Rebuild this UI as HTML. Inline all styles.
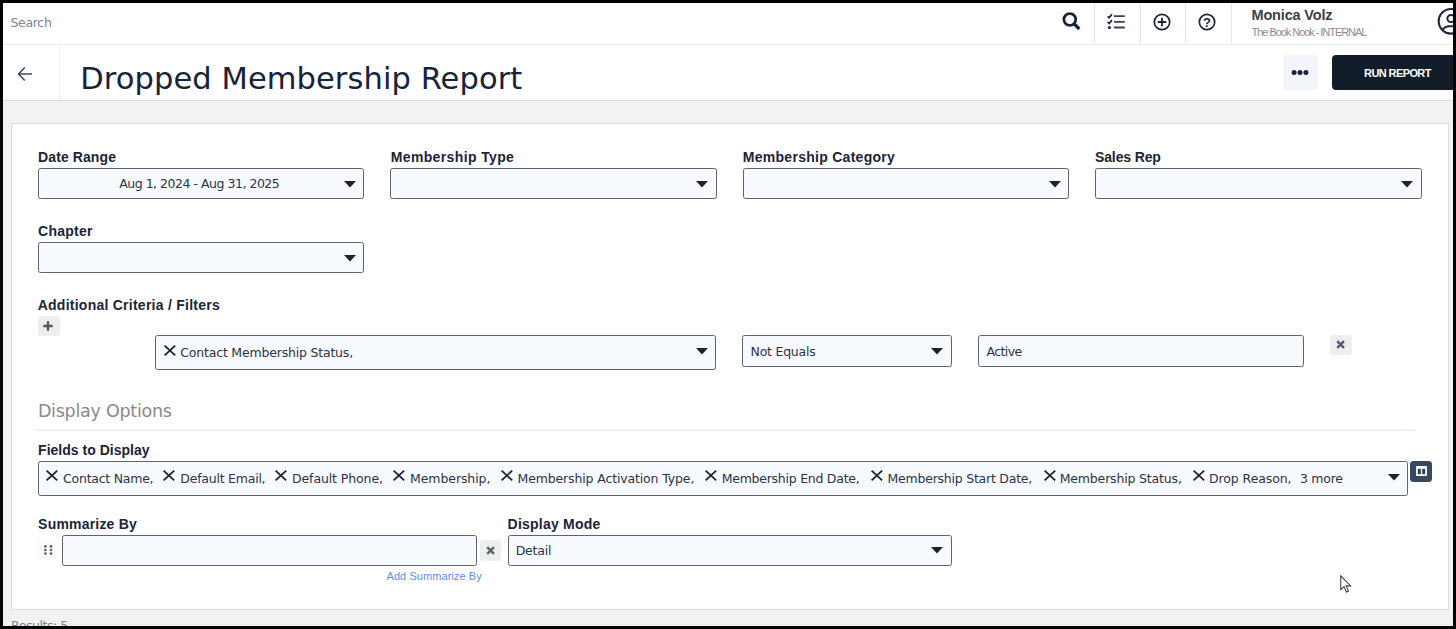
<!DOCTYPE html>
<html lang="en"><head><meta charset="utf-8"><title>Dropped Membership Report</title>
<style>
html,body{margin:0;padding:0}
h1,h2{margin:0;font-weight:400}
body{width:1456px;height:629px;overflow:hidden;background:#f2f2f2;position:relative;font-family:"Liberation Sans",sans-serif}
.t{position:absolute;white-space:nowrap;line-height:1}
.d{font-family:"DejaVu Sans","Liberation Sans",sans-serif}
.a{position:absolute;display:block;overflow:visible}
.inp{position:absolute;box-sizing:border-box;border:1px solid #5f636c;border-radius:2.5px;background:#f7faff}
.blk{position:absolute}
.btn{position:absolute;background:#eeeeee;border-radius:3px}
</style></head><body>
<header>
<div class="blk" style="left:0;top:0;width:1456px;height:44px;background:#fff;border-bottom:1px solid #ececec"></div>
<div class="blk" style="left:0;top:45px;width:1456px;height:55px;background:#fff;border-bottom:1px solid #dadada"></div>
<div class="blk" style="left:59px;top:45px;width:1px;height:55px;background:#efefef"></div>
<div class="blk" style="left:1094px;top:3px;width:1px;height:41px;background:#e6e6e6"></div>
<div class="blk" style="left:1139.6px;top:3px;width:1px;height:41px;background:#e6e6e6"></div>
<div class="blk" style="left:1185px;top:3px;width:1px;height:41px;background:#e6e6e6"></div>
<div class="blk" style="left:1230.7px;top:3px;width:1px;height:41px;background:#e6e6e6"></div>
<div class="t d" style="left:10.50px;top:16.93px;font-size:12.5px;color:#7b8598;letter-spacing:-0.32px">Search</div>
<svg class="a" style="left:1062px;top:12px" width="20" height="20" viewBox="0 0 20 20"><circle cx="7.8" cy="7.5" r="5.9" fill="none" stroke="#1b2438" stroke-width="2.8"/><path d="M11.8 11.5L17.3 17" stroke="#1b2438" stroke-width="3.2"/></svg>
<svg class="a" style="left:1106px;top:13px" width="20" height="18" viewBox="0 0 20 18"><path d="M8 3.2H18.8M8 8.9H18.8M8 14.5H18.8" fill="none" stroke="#3c4253" stroke-width="1.8"/><path d="M1.7 3.3L3.1 4.8L6 1.4M1.7 9L3.1 10.5L6 7.1" fill="none" stroke="#1b2438" stroke-width="1.7"/><circle cx="3.4" cy="14.5" r="1.55" fill="#1b2438"/></svg>
<svg class="a" style="left:1151.7px;top:11.7px" width="20" height="20" viewBox="0 0 20 20"><circle cx="10" cy="10" r="7.7" fill="none" stroke="#1b2438" stroke-width="1.7"/><path d="M10 5.8V14.2M5.8 10H14.2" stroke="#1b2438" stroke-width="1.8"/></svg>
<svg class="a" style="left:1197px;top:11.7px" width="20" height="20" viewBox="0 0 20 20"><circle cx="10" cy="10" r="7.7" fill="none" stroke="#1b2438" stroke-width="1.7"/><text x="10" y="14.7" text-anchor="middle" font-family="Liberation Sans,sans-serif" font-weight="700" font-size="13" fill="#1b2438">?</text></svg>
<div class="t" style="left:1251.50px;top:7.63px;font-size:14.5px;color:#3d3e42;font-weight:700;letter-spacing:-0.16px">Monica Volz</div>
<div class="t" style="left:1251.60px;top:26.69px;font-size:11px;color:#8d8d8d;letter-spacing:-1.052px">The Book Nook - INTERNAL</div>
<svg class="a" style="left:1436px;top:6px" width="20" height="32" viewBox="0 0 20 32"><circle cx="15" cy="15.3" r="12.3" fill="#fff" stroke="#1b2438" stroke-width="2.1"/><circle cx="15" cy="12.5" r="3.6" fill="none" stroke="#1b2438" stroke-width="2"/><path d="M6.8 23.6C8.2 21.2 10.8 20.2 13.5 20.2H20" fill="none" stroke="#1b2438" stroke-width="2"/></svg>
</header>
<div class="pagehead">
<svg class="a" style="left:17px;top:66px" width="16" height="16" viewBox="0 0 16 16"><path d="M15 8H1.8M7.8 1.5L1.5 8L7.8 14.5" fill="none" stroke="#3d4a63" stroke-width="1.5"/></svg>
<h1 class="t d" style="left:80.20px;top:64.40px;font-size:30.5px;color:#17223b;letter-spacing:0.091px">Dropped Membership Report</h1>
<div class="blk" style="left:1283px;top:55px;width:35px;height:35px;background:#f2f5fa;border-radius:3px"></div>
<svg class="a" style="left:1291px;top:70px" width="18" height="5" viewBox="0 0 18 5"><circle cx="3.1" cy="2.5" r="2.5" fill="#1b2438"/><circle cx="9" cy="2.5" r="2.5" fill="#1b2438"/><circle cx="14.9" cy="2.5" r="2.5" fill="#1b2438"/></svg>
<div class="blk" style="left:1331.5px;top:55px;width:130px;height:35px;background:#131d2a;border-radius:4px"></div>
<div class="t" style="left:1364.10px;top:67.59px;font-size:11px;color:#ffffff;font-weight:700;letter-spacing:-0.6px">RUN REPORT</div>
</div>
<main>
<div class="blk" style="left:11px;top:123px;width:1438px;height:487px;background:#fff;box-sizing:border-box;border:1px solid #dedede"></div>
<label class="t" style="left:38.10px;top:149.95px;font-size:14px;color:#1b2438;font-weight:700;letter-spacing:0.089px">Date Range</label>
<div class="inp" style="left:37.7px;top:168px;width:326.5px;height:31px;"></div>
<svg class="a" style="left:343.8px;top:181px" width="12" height="7" viewBox="0 0 12 7"><path d="M0 0H12L6 6.4Z" fill="#222"/></svg>
<label class="t" style="left:390.70px;top:149.95px;font-size:14px;color:#1b2438;font-weight:700;letter-spacing:0.372px">Membership Type</label>
<div class="inp" style="left:390.2px;top:168px;width:326.5px;height:31px;"></div>
<svg class="a" style="left:696.3px;top:181px" width="12" height="7" viewBox="0 0 12 7"><path d="M0 0H12L6 6.4Z" fill="#222"/></svg>
<label class="t" style="left:742.80px;top:149.95px;font-size:14px;color:#1b2438;font-weight:700;letter-spacing:0.278px">Membership Category</label>
<div class="inp" style="left:742.7px;top:168px;width:326.5px;height:31px;"></div>
<svg class="a" style="left:1048.8px;top:181px" width="12" height="7" viewBox="0 0 12 7"><path d="M0 0H12L6 6.4Z" fill="#222"/></svg>
<label class="t" style="left:1095.00px;top:149.95px;font-size:14px;color:#1b2438;font-weight:700;letter-spacing:-0.125px">Sales Rep</label>
<div class="inp" style="left:1095.2px;top:168px;width:326.5px;height:31px;"></div>
<svg class="a" style="left:1401.3px;top:181px" width="12" height="7" viewBox="0 0 12 7"><path d="M0 0H12L6 6.4Z" fill="#222"/></svg>
<div class="t d" style="left:119.20px;top:177.73px;font-size:12.5px;color:#2b3346;letter-spacing:-0.48px">Aug 1, 2024 - Aug 31, 2025</div>
<label class="t" style="left:38.10px;top:224.15px;font-size:14px;color:#1b2438;font-weight:700;letter-spacing:0.233px">Chapter</label>
<div class="inp" style="left:37.7px;top:242px;width:326.5px;height:31px;"></div>
<svg class="a" style="left:343.8px;top:255px" width="12" height="7" viewBox="0 0 12 7"><path d="M0 0H12L6 6.4Z" fill="#222"/></svg>
<label class="t" style="left:37.70px;top:297.95px;font-size:14px;color:#1b2438;font-weight:700;letter-spacing:0.25px">Additional Criteria / Filters</label>
<div class="btn" style="left:38px;top:316px;width:22px;height:19.5px"></div>
<svg class="a" style="left:42.9px;top:320.9px" width="10" height="10" viewBox="0 0 10 10"><path d="M5 0.3V9.7M0.3 5H9.7" stroke="#55585f" stroke-width="2.3"/></svg>
<div class="inp" style="left:155.3px;top:335.3px;width:560.7px;height:34.5px;"></div>
<svg class="a" style="left:163.9px;top:344.8px" width="11.8" height="11" viewBox="0 0 10 10" preserveAspectRatio="none"><path d="M0.5 0.5L9.5 9.5M9.5 0.5L0.5 9.5" stroke="#1c2434" stroke-width="1.5" fill="none"/></svg>
<div class="t d" style="left:180.30px;top:347.43px;font-size:12.5px;color:#2b3346;letter-spacing:-0.192px">Contact Membership Status,</div>
<svg class="a" style="left:696.2px;top:348.3px" width="12" height="7" viewBox="0 0 12 7"><path d="M0 0H12L6 6.4Z" fill="#222"/></svg>
<div class="inp" style="left:742px;top:335.3px;width:210px;height:31.5px;"></div>
<div class="t d" style="left:750.50px;top:345.93px;font-size:12.5px;color:#2b3346;letter-spacing:-0.222px">Not Equals</div>
<svg class="a" style="left:930.8px;top:348.3px" width="12" height="7" viewBox="0 0 12 7"><path d="M0 0H12L6 6.4Z" fill="#222"/></svg>
<div class="inp" style="left:977.7px;top:335.3px;width:326.5px;height:31.5px;"></div>
<div class="t d" style="left:986.50px;top:345.93px;font-size:12.5px;color:#2b3346;letter-spacing:-0.6px">Active</div>
<div class="btn" style="left:1330px;top:335px;width:22px;height:20px"></div>
<svg class="a" style="left:1336.2px;top:340.2px" width="9.2" height="9.2" viewBox="0 0 10 10"><path d="M1.3 1.3L8.7 8.7M8.7 1.3L1.3 8.7" stroke="#525c6b" stroke-width="2.7"/></svg>
<h2 class="t d" style="left:37.90px;top:402.89px;font-size:17.5px;color:#8a8a8a;letter-spacing:-0.257px">Display Options</h2>
<div class="blk" style="left:35px;top:429px;width:1381px;height:2px;background:#eff1f8"></div>
<label class="t" style="left:38.10px;top:442.95px;font-size:14px;color:#1b2438;font-weight:700;letter-spacing:0.012px">Fields to Display</label>
<div class="inp" style="left:37.7px;top:461px;width:1370px;height:34.7px;"></div>
<svg class="a" style="left:46.1px;top:470.4px" width="11.8" height="11" viewBox="0 0 10 10" preserveAspectRatio="none"><path d="M0.5 0.5L9.5 9.5M9.5 0.5L0.5 9.5" stroke="#1c2434" stroke-width="1.5" fill="none"/></svg>
<div class="t d" style="left:63.10px;top:473.43px;font-size:12.5px;color:#2b3346;letter-spacing:-0.25px">Contact Name,</div>
<svg class="a" style="left:163.3px;top:470.4px" width="11.8" height="11" viewBox="0 0 10 10" preserveAspectRatio="none"><path d="M0.5 0.5L9.5 9.5M9.5 0.5L0.5 9.5" stroke="#1c2434" stroke-width="1.5" fill="none"/></svg>
<div class="t d" style="left:180.30px;top:473.43px;font-size:12.5px;color:#2b3346;letter-spacing:-0.231px">Default Email,</div>
<svg class="a" style="left:275.3px;top:470.4px" width="11.8" height="11" viewBox="0 0 10 10" preserveAspectRatio="none"><path d="M0.5 0.5L9.5 9.5M9.5 0.5L0.5 9.5" stroke="#1c2434" stroke-width="1.5" fill="none"/></svg>
<div class="t d" style="left:292.00px;top:473.43px;font-size:12.5px;color:#2b3346;letter-spacing:-0.108px">Default Phone,</div>
<svg class="a" style="left:393px;top:470.4px" width="11.8" height="11" viewBox="0 0 10 10" preserveAspectRatio="none"><path d="M0.5 0.5L9.5 9.5M9.5 0.5L0.5 9.5" stroke="#1c2434" stroke-width="1.5" fill="none"/></svg>
<div class="t d" style="left:410.00px;top:473.43px;font-size:12.5px;color:#2b3346;letter-spacing:-0.08px">Membership,</div>
<svg class="a" style="left:500.5px;top:470.4px" width="11.8" height="11" viewBox="0 0 10 10" preserveAspectRatio="none"><path d="M0.5 0.5L9.5 9.5M9.5 0.5L0.5 9.5" stroke="#1c2434" stroke-width="1.5" fill="none"/></svg>
<div class="t d" style="left:517.50px;top:473.43px;font-size:12.5px;color:#2b3346;letter-spacing:-0.139px">Membership Activation Type,</div>
<svg class="a" style="left:704.7px;top:470.4px" width="11.8" height="11" viewBox="0 0 10 10" preserveAspectRatio="none"><path d="M0.5 0.5L9.5 9.5M9.5 0.5L0.5 9.5" stroke="#1c2434" stroke-width="1.5" fill="none"/></svg>
<div class="t d" style="left:721.70px;top:473.43px;font-size:12.5px;color:#2b3346;letter-spacing:-0.253px">Membership End Date,</div>
<svg class="a" style="left:870.8px;top:470.4px" width="11.8" height="11" viewBox="0 0 10 10" preserveAspectRatio="none"><path d="M0.5 0.5L9.5 9.5M9.5 0.5L0.5 9.5" stroke="#1c2434" stroke-width="1.5" fill="none"/></svg>
<div class="t d" style="left:887.50px;top:473.43px;font-size:12.5px;color:#2b3346;letter-spacing:-0.229px">Membership Start Date,</div>
<svg class="a" style="left:1043.6px;top:470.4px" width="11.8" height="11" viewBox="0 0 10 10" preserveAspectRatio="none"><path d="M0.5 0.5L9.5 9.5M9.5 0.5L0.5 9.5" stroke="#1c2434" stroke-width="1.5" fill="none"/></svg>
<div class="t d" style="left:1059.70px;top:473.43px;font-size:12.5px;color:#2b3346;letter-spacing:-0.165px">Membership Status,</div>
<svg class="a" style="left:1192.6px;top:470.4px" width="11.8" height="11" viewBox="0 0 10 10" preserveAspectRatio="none"><path d="M0.5 0.5L9.5 9.5M9.5 0.5L0.5 9.5" stroke="#1c2434" stroke-width="1.5" fill="none"/></svg>
<div class="t d" style="left:1209.00px;top:473.43px;font-size:12.5px;color:#2b3346;letter-spacing:-0.09px">Drop Reason,</div>
<div class="t d" style="left:1300.00px;top:473.43px;font-size:12.5px;color:#2b3346;letter-spacing:-0.28px">3 more</div>
<svg class="a" style="left:1387.6px;top:473.7px" width="12" height="7" viewBox="0 0 12 7"><path d="M0 0H12L6 6.4Z" fill="#222"/></svg>
<div class="blk" style="left:1410px;top:461px;width:22px;height:21px;background:#394861;border-radius:3.5px"></div>
<svg class="a" style="left:1415.6px;top:466px" width="11" height="10" viewBox="0 0 11 10"><rect x="0" y="0" width="11" height="10" rx="1" fill="#fff"/><rect x="1.8" y="2.8" width="3" height="5.4" fill="#2e3b54"/><rect x="6.2" y="2.8" width="3" height="5.4" fill="#2e3b54"/></svg>
<label class="t" style="left:38.10px;top:517.15px;font-size:14px;color:#1b2438;font-weight:700;letter-spacing:0.2px">Summarize By</label>
<label class="t" style="left:507.60px;top:517.15px;font-size:14px;color:#1b2438;font-weight:700;letter-spacing:0.218px">Display Mode</label>
<div class="blk" style="left:36px;top:541px;width:22px;height:19px;background:#fbfbfb;border-radius:3px"></div>
<svg class="a" style="left:43.7px;top:545.3px" width="8.4" height="10" viewBox="0 0 8.4 10"><circle cx="1.4" cy="1.4" r="1.35" fill="#555f74"/><circle cx="1.4" cy="5" r="1.35" fill="#555f74"/><circle cx="1.4" cy="8.6" r="1.35" fill="#555f74"/><circle cx="7" cy="1.4" r="1.35" fill="#555f74"/><circle cx="7" cy="5" r="1.35" fill="#555f74"/><circle cx="7" cy="8.6" r="1.35" fill="#555f74"/></svg>
<div class="inp" style="left:62px;top:535px;width:414.7px;height:31.2px;"></div>
<div class="btn" style="left:480px;top:540px;width:20.5px;height:21px"></div>
<svg class="a" style="left:485.8px;top:546px" width="9.2" height="9.2" viewBox="0 0 10 10"><path d="M1.3 1.3L8.7 8.7M8.7 1.3L1.3 8.7" stroke="#5b6470" stroke-width="2.7"/></svg>
<div class="inp" style="left:507.5px;top:535px;width:444.2px;height:31.2px;"></div>
<div class="t d" style="left:515.70px;top:545.42px;font-size:12.5px;color:#2b3346;letter-spacing:-0.2px">Detail</div>
<svg class="a" style="left:931.3px;top:547px" width="12" height="7" viewBox="0 0 12 7"><path d="M0 0H12L6 6.4Z" fill="#222"/></svg>
<div class="t" style="left:386.50px;top:571.09px;font-size:11px;color:#5a90e6;letter-spacing:0.067px">Add Summarize By</div>
</main>
<div class="t d" style="left:11.00px;top:620.42px;font-size:12.5px;color:#7b8598;letter-spacing:-0.445px">Results: 5</div>
<svg class="a" style="left:1340px;top:574.8px" width="12.8" height="19.2" viewBox="0 0 12 18"><path d="M0.7 0.8V13.6L3.8 10.8L6 16L8 15.2L5.8 10.2H10Z" fill="#fff" stroke="#3a3a3a" stroke-width="0.95"/></svg>
<div class="blk" style="left:0;top:0;width:1456px;height:629px;box-sizing:border-box;border:3px solid #000;border-bottom-width:3.5px"></div>
</body></html>
